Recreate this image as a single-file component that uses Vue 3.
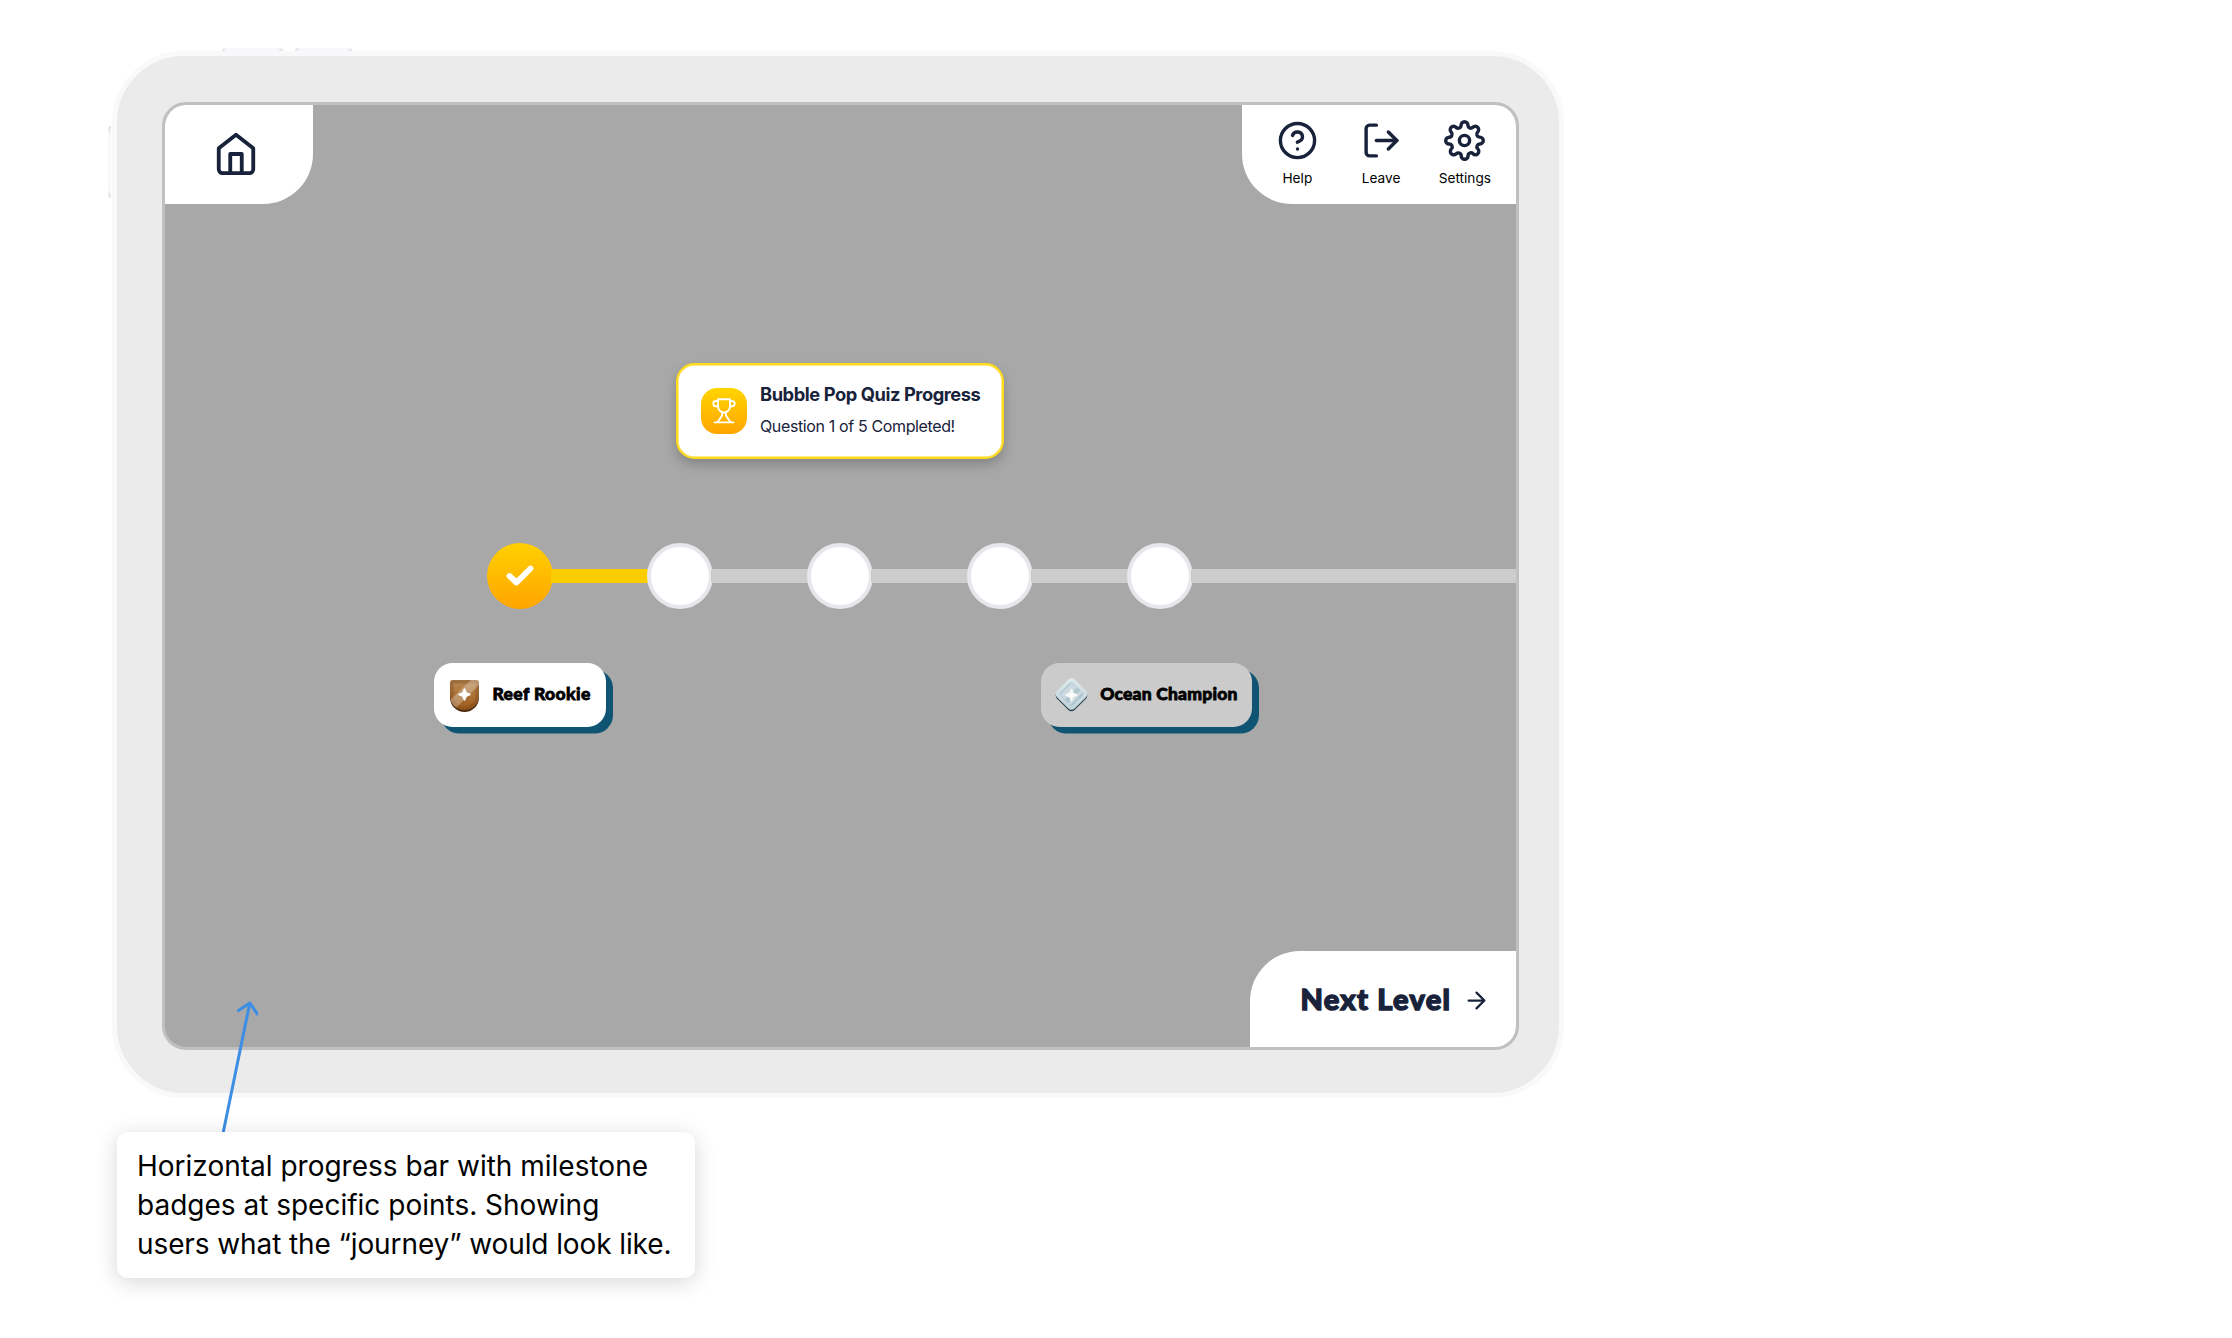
<template>
  <div class="board">
    <div class="device">
      <i class="key key-up"></i>
      <i class="key key-down"></i>
      <i class="key key-power"></i>
      <div class="screen">
        <header class="top">
          <button class="tab home" aria-label="Home">
            <svg width="46" height="46" viewBox="0 0 24 24" class="line">
              <path d="M3 9l9-7 9 7v11a2 2 0 0 1-2 2H5a2 2 0 0 1-2-2z" />
              <path d="M9 22V12h6v10" />
            </svg>
          </button>
          <nav class="tab menu">
            <button v-for="item in menu" :key="item.label" class="menu-item">
              <svg width="41" height="41" viewBox="0 0 24 24" class="line">
                <path v-for="d in item.paths" :key="d" :d="d" />
              </svg>
              <span>{{ item.label }}</span>
            </button>
          </nav>
        </header>

        <main class="main">
          <section class="card">
            <div class="trophy">
              <svg width="24" height="26" viewBox="0 0 24 26">
                <path d="M6 1.2h12v7.3a6 6 0 0 1-12 0z" />
                <path d="M6 3H3.7A2.3 2.3 0 0 0 1.4 5.3v.6a2.3 2.3 0 0 0 2.3 2.3H6M18 3h2.3a2.3 2.3 0 0 1 2.3 2.3v.6a2.3 2.3 0 0 1-2.3 2.3H18" />
                <path d="M10.2 14.3v2.2c0 1.2-.5 2-1.3 2.8l-3.2 4.6M13.8 14.3v2.2c0 1.2.5 2 1.3 2.8l3.2 4.6M2.6 24.4h18.8" />
              </svg>
            </div>
            <div class="card-text">
              <h2>Bubble Pop Quiz Progress</h2>
              <p>Question {{ completed }} of {{ total }} Completed!</p>
            </div>
          </section>

          <div class="track">
            <template v-for="n in total" :key="n">
              <div class="step" :class="{ done: n <= completed }">
                <svg v-if="n <= completed" width="30" height="24" viewBox="0 0 30 24">
                  <path d="M4.5 12l7 6.5L25.5 4.5" />
                </svg>
              </div>
              <div class="bar" :class="{ done: n <= completed, last: n === total }"></div>
            </template>
          </div>

          <div class="badges">
            <div class="badge">
              <svg class="shield" width="29" height="32" viewBox="0 0 29 32">
                <defs>
                  <linearGradient id="bronze" x1="0" y1="0" x2="0" y2="1">
                    <stop offset="0" stop-color="#a07040" />
                    <stop offset="1" stop-color="#8f5116" />
                  </linearGradient>
                  <linearGradient id="bronzeInner" x1="0" y1="0" x2="0" y2="1">
                    <stop offset="0" stop-color="#b5834d" />
                    <stop offset="1" stop-color="#a06020" />
                  </linearGradient>
                  <clipPath id="shieldClip">
                    <path d="M2.5 0h24A2.5 2.5 0 0 1 29 2.5V16a14.5 14 0 0 1-29 0V2.5A2.5 2.5 0 0 1 2.5 0z" />
                  </clipPath>
                </defs>
                <path d="M0 15h29v2.5a14.5 14.5 0 0 1-29 0z" fill="#4c2b10" />
                <g clip-path="url(#shieldClip)">
                  <path d="M0 0h29v31H0z" fill="url(#bronze)" />
                  <path d="M3.5 3.5h22V16a11 10.5 0 0 1-22 0z" fill="url(#bronzeInner)" />
                  <path d="M-2 22L23-2h8v5L5 29z" fill="#fff" opacity=".27" />
                </g>
                <path d="M14.5 9l1.6 3.9 3.9 1.6-3.9 1.6-1.6 3.9-1.6-3.9-3.9-1.6 3.9-1.6z" fill="#fff" stroke="#fff" stroke-width="1.6" stroke-linejoin="round" />
              </svg>
              <span>Reef Rookie</span>
            </div>
            <div class="badge locked">
              <svg width="35" height="36" viewBox="0 0 35 36">
                <defs>
                  <linearGradient id="ice" x1="0" y1="0" x2="1" y2="1">
                    <stop offset="0" stop-color="#e0ebef" />
                    <stop offset="1" stop-color="#bdd0d8" />
                  </linearGradient>
                </defs>
                <rect x="5" y="6" width="25" height="25" rx="4.5" transform="rotate(45 17.5 18.5)" fill="#2f4450" />
                <rect x="5" y="4.5" width="25" height="25" rx="4.5" transform="rotate(45 17.5 17)" fill="url(#ice)" />
                <rect x="8.5" y="8" width="18" height="18" rx="2" transform="rotate(45 17.5 17)" fill="#b0c6cf" />
                <path d="M6 17.5L18 5.5l5 5L11 22.5zM14 26L26.5 13.5l2 2L16 28z" fill="#fff" opacity=".35" />
                <path d="M17.5 12.5l1.6 3.9 3.9 1.6-3.9 1.6-1.6 3.9-1.6-3.9-3.9-1.6 3.9-1.6z" fill="#fff" stroke="#f4f6f6" stroke-width="1.8" stroke-linejoin="round" />
              </svg>
              <span>Ocean Champion</span>
            </div>
          </div>
        </main>

        <button class="next">
          <span>Next Level</span>
          <svg width="27" height="27" viewBox="0 0 24 24" class="line">
            <path d="M5 12h14M12 5l7 7-7 7" />
          </svg>
        </button>
      </div>
    </div>

    <svg class="pointer" width="40" height="135" viewBox="0 0 40 135">
      <path d="M5.2 134.5L31.8 5M20.5 12.4L31.8 5l7.7 11.2" />
    </svg>
    <aside class="note">
      Horizontal progress bar with milestone<br />
      badges at specific points. Showing<br />
      <span>users what the “journey” would look like.</span>
    </aside>
  </div>
</template>

<script setup>
import { ref } from 'vue';

const completed = ref(1);
const total = 5;

const menu = [
  {
    label: 'Help',
    paths: [
      'M12 2a10 10 0 1 0 0 20 10 10 0 0 0 0-20z',
      'M9.09 9a3 3 0 0 1 5.83 1c0 2-3 3-3 3',
      'M12 17h.01',
    ],
  },
  {
    label: 'Leave',
    paths: ['M9 21H5a2 2 0 0 1-2-2V5a2 2 0 0 1 2-2h4', 'M16 17l5-5-5-5', 'M21 12H9'],
  },
  {
    label: 'Settings',
    paths: [
      'M12 9a3 3 0 1 0 0 6 3 3 0 0 0 0-6z',
      'M19.4 15a1.65 1.65 0 0 0 .33 1.82l.06.06a2 2 0 0 1 0 2.83 2 2 0 0 1-2.83 0l-.06-.06a1.65 1.65 0 0 0-1.82-.33 1.65 1.65 0 0 0-1 1.51V21a2 2 0 0 1-2 2 2 2 0 0 1-2-2v-.09A1.65 1.65 0 0 0 9 19.4a1.65 1.65 0 0 0-1.82.33l-.06.06a2 2 0 0 1-2.83 0 2 2 0 0 1 0-2.83l.06-.06a1.65 1.65 0 0 0 .33-1.82 1.65 1.65 0 0 0-1.51-1H3a2 2 0 0 1-2-2 2 2 0 0 1 2-2h.09A1.65 1.65 0 0 0 4.6 9a1.65 1.65 0 0 0-.33-1.82l-.06-.06a2 2 0 0 1 0-2.83 2 2 0 0 1 2.83 0l.06.06a1.65 1.65 0 0 0 1.82.33H9a1.65 1.65 0 0 0 1-1.51V3a2 2 0 0 1 2-2 2 2 0 0 1 2 2v.09a1.65 1.65 0 0 0 1 1.51 1.65 1.65 0 0 0 1.82-.33l.06-.06a2 2 0 0 1 2.83 0 2 2 0 0 1 0 2.83l-.06.06a1.65 1.65 0 0 0-.33 1.82V9a1.65 1.65 0 0 0 1.51 1H21a2 2 0 0 1 2 2 2 2 0 0 1-2 2h-.09a1.65 1.65 0 0 0-1.51 1z',
    ],
  },
];
</script>

<style>
body { background: #fff; }
</style>

<style scoped>
.board { position: relative; box-sizing: border-box; width: 2232px; height: 1338px; padding: 51px 0 0 111.5px; font-family: Inter, sans-serif; overflow: hidden; }
.board * { box-sizing: border-box; }
button { padding: 0; border: none; font: inherit; cursor: pointer; }
svg { display: block; flex: none; }
.line { fill: none; stroke: #18223a; stroke-width: 2; stroke-linecap: round; stroke-linejoin: round; }

.device { position: relative; width: 1452.5px; height: 1047.3px; padding: 46.4px 40px 43px 45px; border: 5.4px solid #f9f9fb; border-radius: 72px; background: #ebebeb; }
.key { position: absolute; background: linear-gradient(90deg, #dedede, #f8f8fa 8%, #f8f8fa 92%, #dedede); }
.key-up { left: 105px; top: -8.4px; width: 61px; height: 3px; border-radius: 3px 3px 0 0; }
.key-down { left: 178px; top: -8.4px; width: 57px; height: 3px; border-radius: 3px 3px 0 0; }
.key-power { left: -9px; top: 69.6px; width: 3.5px; height: 72px; border-radius: 3px 0 0 3px; background: linear-gradient(#dedede, #f8f8fa 10%, #f8f8fa 90%, #dedede); }
.screen { display: flex; flex-direction: column; width: 1357px; height: 948px; border: 3px solid #c0c0c0; border-radius: 24px; background: #a8a8a8; overflow: hidden; }

.top { display: flex; justify-content: space-between; height: 98.5px; flex: none; }
.tab { display: flex; background: #fff; }
.home { width: 148px; align-items: center; justify-content: center; border-radius: 0 0 50px 0; padding: 0 4.5px 1.5px 0; }
.menu { width: 274px; border-radius: 0 0 0 50px; padding: 14.6px 8.8px 0 14px; }
.menu-item { flex: 1; display: flex; flex-direction: column; align-items: center; gap: 8.9px; background: none; color: #000; font-size: 13.65px; line-height: 17px; }

.main { flex: 1; display: flex; flex-direction: column; }
.card { display: flex; align-items: center; gap: 13.3px; width: 328.5px; height: 95.5px; margin: 159.3px 0 0 511.2px; padding-left: 23px; border: 2.3px solid #ffd91a; border-radius: 18.5px; background: #fff; box-shadow: 0 6px 12px rgba(0, 0, 0, 0.2), inset 0 0 0 0.5px #ffd91a; color: #18223a; }
.trophy { display: flex; align-items: center; justify-content: center; width: 46px; height: 46px; border-radius: 16px; background: linear-gradient(#ffd500, #ffa500); }
.trophy path { fill: none; stroke: #fff; stroke-width: 1.9; stroke-linecap: round; stroke-linejoin: round; }
.card-text { padding-bottom: 3px; white-space: nowrap; }
h2 { margin: 0; font-size: 18.3px; line-height: 27px; font-weight: 700; letter-spacing: -0.43px; }
p { margin: 7px 0 0; font-size: 16px; line-height: 23px; letter-spacing: -0.37px; }

.track { display: flex; align-items: center; margin: 84.4px 0 0 322.5px; }
.step { display: flex; align-items: center; justify-content: center; flex: none; width: 66px; height: 66px; border: 4px solid #e5e7eb; border-radius: 50%; background: #fff; }
.step.done { border: none; background: linear-gradient(#ffd000, #ffa500); }
.step path { fill: none; stroke: #fff; stroke-width: 5.8; stroke-linecap: round; stroke-linejoin: round; }
.bar { flex: none; width: 98px; height: 14.7px; margin: 0 -2px; background: #ccc; }
.bar.done { background: #fc0; }
.bar.last { flex: 1; margin-right: 0; }

.badges { display: flex; align-items: flex-start; margin: 54px 0 0 269.4px; gap: 435px; }
.badge { display: flex; align-items: center; width: 172.3px; height: 64.3px; padding-left: 16px; border-radius: 18.5px; background: #fff; box-shadow: 7px 6.6px 0 #0f5573; color: #000; font-family: Lato, sans-serif; font-weight: 900; font-size: 17.5px; letter-spacing: 0.4px; white-space: nowrap; -webkit-text-stroke: 0.8px #000; }
.badge.locked { width: 211.3px; padding-left: 13px; background: #cbcbcb; }
.badge span { margin-left: 13.5px; padding-bottom: 3px; }
.badge.locked span { margin-left: 11px; letter-spacing: 0.2px; }
.shield { margin-top: 1.5px; }
.badge svg { -webkit-text-stroke: 0; }

.next { display: flex; align-items: center; align-self: flex-end; flex: none; width: 266px; height: 96.5px; padding-left: 51px; gap: 11.5px; border-radius: 50px 0 0 0; background: #fff; color: #18223a; font-family: Lato, sans-serif; font-weight: 900; font-size: 29px; letter-spacing: 1.25px; white-space: nowrap; -webkit-text-stroke: 1.4px #18223a; }
.next span { padding-bottom: 2px; }
.next svg { margin-top: 2px; }

.pointer { position: absolute; left: 218px; top: 998px; }
.pointer path { fill: none; stroke: #3c8ee4; stroke-width: 3; stroke-linecap: round; stroke-linejoin: round; }
.note { position: relative; width: 578px; height: 146px; margin: 33.7px 0 0 5.5px; padding: 15.3px 20px; border-radius: 11px; background: #fff; box-shadow: 0 4px 22px rgba(0, 0, 0, 0.16); color: #000; font-size: 28px; line-height: 39px; white-space: nowrap; }
.note span { letter-spacing: -0.1px; }
</style>
